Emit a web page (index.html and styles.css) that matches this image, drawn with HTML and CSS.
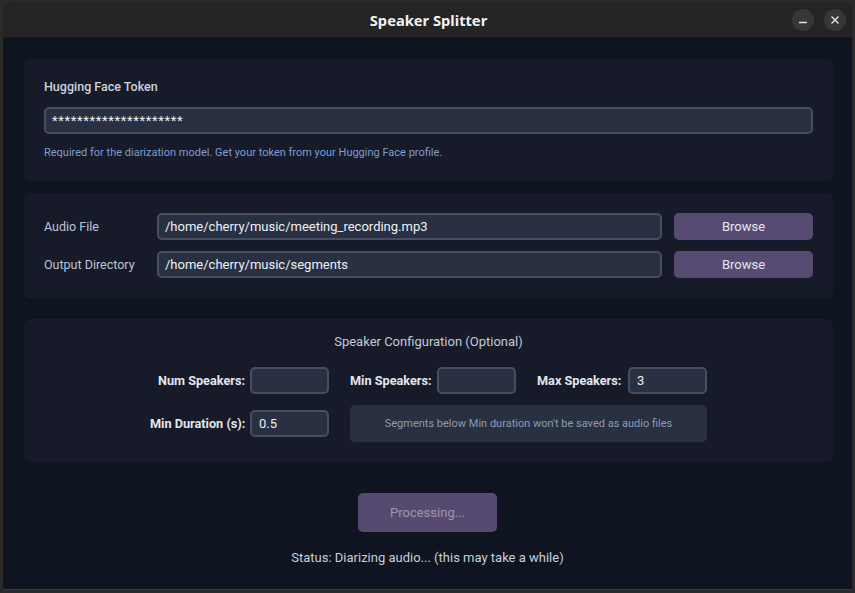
FILE: index.html
```html
<!DOCTYPE html>
<html>
<head>
<meta charset="utf-8">
<link rel="stylesheet" href="styles.css">
</head>
<body>
<div class="window">
  <div class="titlebar">
    <div class="title">Speaker Splitter</div>
    <div class="controls">
      <span class="ctl"><svg width="10" height="10" viewBox="0 0 10 10"><line x1="1" y1="7.5" x2="9" y2="7.5" stroke="#e6e6e6" stroke-width="1.4"/></svg></span>
      <span class="ctl"><svg width="10" height="10" viewBox="0 0 10 10"><path d="M1.5 1.5 L8.5 8.5 M8.5 1.5 L1.5 8.5" stroke="#e6e6e6" stroke-width="1.4"/></svg></span>
    </div>
  </div>
  <div class="content">
    <section class="card token">
      <div class="label strong">Hugging Face Token</div>
      <div class="input wide">*********************</div>
      <div class="hint">Required for the diarization model. Get your token from your Hugging Face profile.</div>
    </section>
    <section class="card files">
      <div class="row">
        <div class="flabel">Audio File</div>
        <div class="input path">/home/cherry/music/meeting_recording.mp3</div>
        <div class="btn">Browse</div>
      </div>
      <div class="row">
        <div class="flabel">Output Directory</div>
        <div class="input path">/home/cherry/music/segments</div>
        <div class="btn">Browse</div>
      </div>
    </section>
    <section class="card config">
      <div class="ctitle">Speaker Configuration (Optional)</div>
      <div class="grid">
        <div class="srow">
          <div class="group"><span class="slabel first">Num Speakers:</span><span class="input small"></span></div>
          <div class="group"><span class="slabel l2">Min Speakers:</span><span class="input small"></span></div>
          <div class="group"><span class="slabel l3">Max Speakers:</span><span class="input small">3</span></div>
        </div>
        <div class="srow">
          <div class="group"><span class="slabel first">Min Duration (s):</span><span class="input small">0.5</span></div>
          <div class="info">Segments below Min duration won't be saved as audio files</div>
        </div>
      </div>
    </section>
    <div class="action">
      <div class="process">Processing...</div>
      <div class="status">Status: Diarizing audio... (this may take a while)</div>
    </div>
  </div>
</div>
</body>
</html>
```

FILE: styles.css
```css
* { box-sizing: border-box; }
html, body { margin: 0; padding: 0; }
body {
  width: 855px;
  height: 593px;
  background: #2b2b2b;
  font-family: Roboto, "Liberation Sans", sans-serif;
  overflow: hidden;
}
.window {
  margin: 2px 3px 0 3px;
  width: 849px;
  height: 588px;
  border-radius: 10px 10px 0 0;
  overflow: hidden;
  background: #0e1420;
  display: flex;
  flex-direction: column;
  border-bottom: 1px solid #3a3a3a;
}
.titlebar {
  height: 36px;
  flex: none;
  background: #242424;
  border-bottom: 1px solid #1a1a1a;
  display: flex;
  align-items: center;
  justify-content: center;
  position: relative;
}
.title {
  color: #f2f2f2;
  font-family: "Noto Sans", "Open Sans", sans-serif;
  font-weight: 700;
  font-size: 14.7px;
  margin-left: 2px;
}
.controls {
  position: absolute;
  right: 6px;
  top: 7px;
  display: flex;
  gap: 10px;
}
.ctl {
  width: 22px;
  height: 22px;
  border-radius: 50%;
  background: #373737;
  display: flex;
  align-items: center;
  justify-content: center;
}
.content {
  flex: 1;
  padding: 21px 19px 0 21px;
  display: flex;
  flex-direction: column;
}
.card {
  background: #171a28;
  border-radius: 6px;
  padding: 20px;
}
.token { height: 122px; }
.label {
  color: #ccd3df;
  font-size: 12.5px;
  line-height: 16px;
  font-weight: 500;
}
.input {
  height: 27px;
  background: #283041;
  border: 2px solid #454e63;
  border-radius: 5px;
  color: #eef1f6;
  font-size: 13px;
  line-height: 23px;
  padding: 0 6px;
  white-space: nowrap;
}
.wide { margin-top: 12px; letter-spacing: 0.65px; }
.hint {
  margin-top: 12px;
  font-size: 11px;
  line-height: 14px;
  color: #7e9ed2;
}
.files {
  margin-top: 12px;
  height: 105px;
  display: flex;
  flex-direction: column;
  gap: 11px;
}
.row {
  display: flex;
  align-items: center;
}
.flabel {
  width: 113px;
  color: #bcc5d6;
  font-size: 12.5px;
}
.path { width: 505px; }
.btn {
  margin-left: 12px;
  width: 139px;
  height: 27px;
  border-radius: 5px;
  background: #584b72;
  color: #e6e6ee;
  font-size: 13px;
  display: flex;
  align-items: center;
  justify-content: center;
}
.config {
  margin-top: 21px;
  height: 143px;
  padding-top: 16px;
}
.ctitle {
  text-align: center;
  color: #c3cad8;
  font-size: 13px;
  line-height: 14px;
}
.grid {
  width: 557px;
  margin: 18px auto 0;
  display: flex;
  flex-direction: column;
  gap: 11px;
}
.srow {
  display: flex;
  align-items: center;
  gap: 21px;
}
.group {
  display: flex;
  align-items: center;
  gap: 5px;
}
.slabel {
  flex: none;
  color: #e2e6ee;
  font-size: 12.7px;
  font-weight: 700;
  white-space: nowrap;
}
.slabel.first {
  width: 95px;
  text-align: right;
}
.slabel.l2 { width: 82px; }
.slabel.l3 { width: 86px; }
.small {
  flex: none;
  width: 79px;
  display: inline-block;
  padding: 0 7px;
}
.info {
  flex: 1;
  height: 37px;
  background: #283041;
  border-radius: 5px;
  color: #8f9bb2;
  font-size: 11px;
  display: flex;
  align-items: center;
  justify-content: center;
}
.action {
  display: flex;
  flex-direction: column;
  align-items: center;
  margin-top: 31px;
  padding-right: 2px;
}
.process {
  width: 139px;
  height: 39px;
  border-radius: 5px;
  background: #574a70;
  color: #9c9aac;
  font-size: 13px;
  display: flex;
  align-items: center;
  justify-content: center;
}
.status {
  margin-top: 18px;
  color: #c9d0dc;
  font-size: 13px;
  line-height: 16px;
}
```
